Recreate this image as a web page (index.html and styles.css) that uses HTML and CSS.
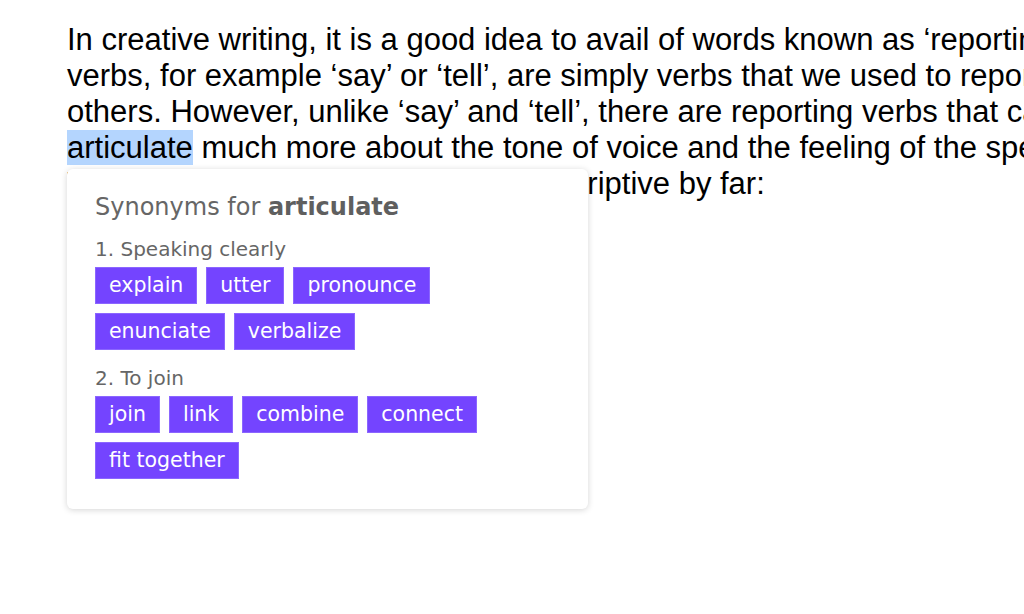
FILE: index.html
```html
<!DOCTYPE html>
<html lang="en">
<head>
    <meta charset="UTF-8">
    <meta name="viewport" content="width=device-width, initial-scale=1.0">
    <title>Synonyms</title>
    <link rel="stylesheet" href="styles.css">
</head>
<body>
    <div class="page">
        <p class="story">
            In creative writing, it is a good idea to avail of words known as ‘reporting verbs’. Reporting<br>
            verbs, for example ‘say’ or ‘tell’, are simply verbs that we used to report the words of<br>
            others. However, unlike ‘say’ and ‘tell’, there are reporting verbs that can<br>
            <span class="picked">articulate</span> much more about the tone of voice and the feeling of the speaker.<br>
            The reporting verbs are far more descriptive by far:
        </p>

        <div class="synonyms">
            <h2>Synonyms for <b>articulate</b></h2>

            <div class="sense">
                <h3>1. Speaking clearly</h3>
                <div class="chips">
                    <a href="#">explain</a>
                    <a href="#">utter</a>
                    <a href="#">pronounce</a>
                    <a href="#">enunciate</a>
                    <a href="#">verbalize</a>
                </div>
            </div>

            <div class="sense">
                <h3>2. To join</h3>
                <div class="chips">
                    <a href="#">join</a>
                    <a href="#">link</a>
                    <a href="#">combine</a>
                    <a href="#">connect</a>
                    <a href="#">fit together</a>
                </div>
            </div>
        </div>
    </div>
</body>
</html>
```

FILE: styles.css
```css
body {
    margin: 0;
    background: #fff;
    overflow: hidden;
}

.page {
    position: relative;
    padding: 22px 0 0 67px;
    height: 592px;
}

.story {
    margin: 0;
    font-family: "Liberation Sans", Arial, sans-serif;
    font-size: 31px;
    line-height: 36px;
    color: #000;
    white-space: nowrap;
}

.story .picked {
    background: #b4d5fe;
}

/* popup under the picked word */
.synonyms {
    position: absolute;
    left: 67px;
    top: 169px;
    width: 521px;
    box-sizing: border-box;
    padding: 24px 28px 30px;
    background: #fff;
    border-radius: 6px;
    box-shadow: 0 1px 6px rgba(0, 0, 0, 0.17);
    font-family: "DejaVu Sans", Verdana, sans-serif;
}

.synonyms h2 {
    margin: 0 0 17px;
    font-size: 24px;
    line-height: 28px;
    font-weight: normal;
    color: #666;
}

.synonyms h2 b {
    font-weight: bold;
    color: #5f5f5f;
}

.sense h3 {
    margin: 0 0 7px;
    font-size: 20px;
    line-height: 22px;
    font-weight: normal;
    color: #666;
}

.sense + .sense {
    margin-top: 17px;
}

.chips {
    display: flex;
    flex-wrap: wrap;
    gap: 9px;
}

.chips a {
    padding: 6px 13px;
    font-size: 20.5px;
    line-height: 23px;
    color: #fff;
    text-decoration: none;
    background: #7444ff;
    border: 1px solid #8b66ff;
}
```
